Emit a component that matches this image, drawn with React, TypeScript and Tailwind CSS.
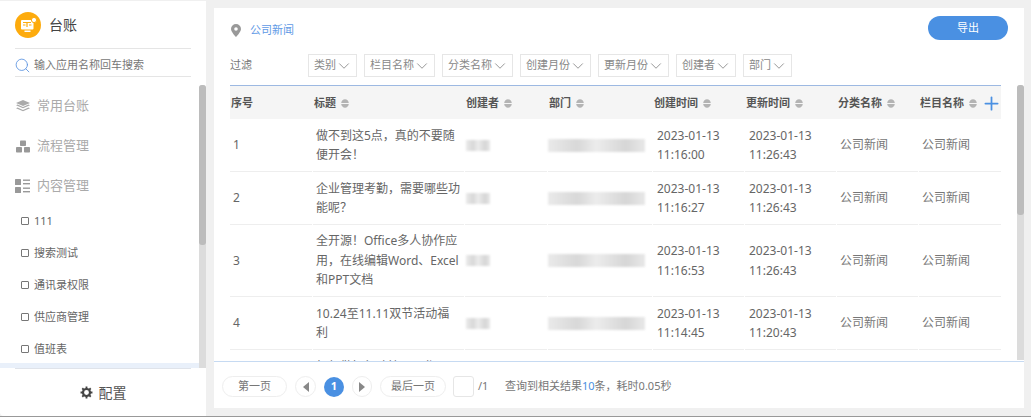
import React from "react";
import { ChevronDown, Plus, Search } from "lucide-react";

const FONT = "font-['Noto_Sans','Noto_Sans_CJK_SC',sans-serif]";

const Sort = () => (
  <svg width="8" height="9" viewBox="0 0 8 9" className="ml-[5px] shrink-0">
    <path d="M4 0.3C6 0.3 7.6 2 7.8 4H0.2C0.4 2 2 0.3 4 0.3z" fill="#b4b4b4" />
    <path d="M4 8.7C6 8.7 7.6 7 7.8 5H0.2C0.4 7 2 8.7 4 8.7z" fill="#b4b4b4" />
  </svg>
);

const Sub = ({ label }: { label: string }) => (
  <div className="flex h-8 items-center pl-[21px] text-[11px] text-[#666]">
    <span className="mr-[5px] h-[8px] w-[8px] rounded-[1px] border border-[#777]" />
    {label}
  </div>
);

const Blur = ({ w, h }: { w: number; h: number }) => (
  <div
    className="bg-[linear-gradient(90deg,#eaeaea,#d8d8d8_30%,#ececec_50%,#d6d6d6_80%,#e8e8e8)] blur-[1px]"
    style={{ width: w, height: h }}
  />
);

const filters = ["类别", "栏目名称", "分类名称", "创建月份", "更新月份", "创建者", "部门"];
const headers = ["序号", "标题", "创建者", "部门", "创建时间", "更新时间", "分类名称", "栏目名称"];

const rows = [
  { n: "1", t: "做不到这5点，真的不要随便开会！", c: "2023-01-13", c2: "11:16:00", u: "11:26:43", h: "h-[53px]" },
  { n: "2", t: "企业管理考勤，需要哪些功能呢？", c: "2023-01-13", c2: "11:16:27", u: "11:26:43", h: "h-[53px]" },
  { n: "3", t: "全开源！Office多人协作应用，在线编辑Word、Excel和PPT文档", c: "2023-01-13", c2: "11:16:53", u: "11:26:43", h: "h-[72px]" },
  { n: "4", t: "10.24至11.11双节活动福利", c: "2023-01-13", c2: "11:14:45", u: "11:20:43", h: "h-[53px]" },
];

const cell = "border-b border-[#eeeeee] flex items-center text-[12px] leading-[19.5px] text-[#666]";
const cols = "grid grid-cols-[82px_151px_82px_104px_91px_91px_81px_82px] gap-x-px";

export default function App() {
  return (
    <div className={`${FONT} flex h-[417px] w-[1031px] overflow-hidden border-b border-[#999] bg-[#f0f0f0] pt-[1px]`}>
      <aside className="relative flex h-full w-[206px] shrink-0 flex-col rounded-bl-[4px] bg-white">
        <div className="mx-[15px] flex h-[48px] shrink-0 items-center gap-[8px] border-b border-[#e5e5e5]">
          <svg width="26" height="26" viewBox="0 0 26 26" className="shrink-0">
            <circle cx="13" cy="13" r="13" fill="#fdab0d" />
            <rect x="6" y="8" width="12.5" height="9.5" rx="1" fill="#fff" />
            <rect x="9.5" y="18.5" width="6" height="1.5" fill="#fff" />
            <path d="M8 10.5h8M8 13h2.5M12 11v4M14 13h2.5" stroke="#fdab0d" strokeWidth="1.2" />
            <circle cx="19" cy="8" r="2.6" fill="#fff" stroke="#fdab0d" strokeWidth="1" />
          </svg>
          <span className="text-[14px] text-[#444]">台账</span>
        </div>
        <div className="mx-[15px] flex h-[28px] shrink-0 items-center border-b border-[#e5e5e5] pt-[5px]">
          <Search size={17} strokeWidth={1.2} className="-ml-[1.5px] mr-[3.5px] text-[#5b94e0]" />
          <span className="text-[11px] text-[#777]">输入应用名称回车搜索</span>
        </div>
        <nav className="relative flex-1 overflow-hidden pt-[9px]">
          {[
            ["常用台账", <svg key="a" width="14" height="13" viewBox="0 0 14 13" fill="#aaa"><path d="M7 0l7 3-7 3-7-3z" /><path d="M0 5.2l1.6-.7L7 6.9l5.4-2.4 1.6.7L7 8.3z" /><path d="M0 8.2l1.6-.7L7 9.9l5.4-2.4 1.6.7L7 11.3z" /></svg>],
            ["流程管理", <svg key="b" width="14" height="13" viewBox="0 0 14 13" fill="#999"><rect x="4" y="0.5" width="6" height="5.5" rx="0.8" /><rect x="0" y="7" width="6" height="5.5" rx="0.8" /><rect x="8" y="7" width="6" height="5.5" rx="0.8" /></svg>],
            ["内容管理", <svg key="c" width="15" height="14" viewBox="0 0 15 14" fill="#999"><rect x="0" y="0" width="6" height="6" rx="0.6" /><rect x="0" y="8" width="6" height="6" rx="0.6" /><rect x="8" y="0.5" width="7" height="1.4" /><rect x="8" y="4" width="7" height="1.4" /><rect x="8" y="8.5" width="7" height="1.4" /><rect x="8" y="12" width="7" height="1.4" /></svg>],
          ].map(([label, icon]) => (
            <div key={label as string} className="flex h-[40px] items-center pl-[15px] text-[13px] text-[#aaa]">
              <span className="mr-[7px] flex w-[15px] justify-center">{icon}</span>
              {label}
            </div>
          ))}
          <div className="-mt-[1px]">
            <Sub label="111" />
            <Sub label="搜索测试" />
            <Sub label="通讯录权限" />
            <Sub label="供应商管理" />
            <Sub label="值班表" />
          </div>
          <div className="absolute bottom-0 left-0 right-0 h-[5px] bg-[#e9f0fa]" />
          <div className="absolute bottom-0 right-0 top-[8px] w-[7px] rounded-t-[3px] bg-[#dcdcdc]" />
          <div className="absolute right-0 top-[8px] h-[160px] w-[7px] rounded-[3px] bg-[#bcbcbc]" />
        </nav>
        <div className="mx-[15px] border-t border-[#dfe3ea]" />
        <div className="flex h-[47px] shrink-0 items-center justify-center gap-[6px] text-[14px] text-[#555]">
          <svg width="13" height="13" viewBox="0 0 24 24" fill="none" stroke="#444" strokeWidth="4">
            <circle cx="12" cy="12" r="6.5" />
            <path d="M12 1v4M12 19v4M1 12h4M19 12h4M4.2 4.2l2.8 2.8M17 17l2.8 2.8M4.2 19.8 7 17M17 7l2.8-2.8" strokeWidth="3.4" />
          </svg>
          配置
        </div>
      </aside>

      <div className="min-w-0 flex-1 pb-[8px] pl-[8px] pr-[7px] pt-[7px]">
        <main className="relative flex h-full flex-col bg-white">
          <div className="flex h-[29px] shrink-0 items-start justify-end pr-[16px] pt-[8px]">
            <div className="flex-1 pl-[17px] pt-[6px]">
              <div className="flex items-center text-[11px] text-[#5f9ae6]">
                <svg width="10" height="13" viewBox="0 0 10 13" className="mr-[9px] shrink-0">
                  <path fillRule="evenodd" d="M5 0a5 5 0 0 1 5 5c0 3-5 8-5 8S0 8 0 5a5 5 0 0 1 5-5zm0 3.2a1.8 1.8 0 1 0 0 3.6 1.8 1.8 0 0 0 0-3.6z" fill="#999" />
                </svg>
                公司新闻
              </div>
            </div>
            <button className="flex h-[24px] w-[80px] items-center justify-center rounded-full bg-[#4a90e2] text-[11px] text-white">导出</button>
          </div>
          <div className="flex shrink-0 items-center pl-[16px] pt-[17px]">
            <span className="w-[78px] text-[11px] text-[#777]">过滤</span>
            <div className="flex gap-[7px]">
              {filters.map((f) => (
                <div key={f} className="flex h-[23px] items-center gap-[3px] border border-[#e6e6e6] pl-[5px] pr-[8px] text-[11px] text-[#888]">
                  {f}
                  <ChevronDown size={18} strokeWidth={0.9} className="-mx-[4.5px] text-[#666]" />
                </div>
              ))}
            </div>
          </div>

          <div className="relative ml-[16px] mt-[8px] min-h-0 flex-1 overflow-hidden">
            <div className="w-[771px] border-t border-[#9db9e2]">
              <div className={`${cols} bg-[#f5f5f5]`}>
                {headers.map((h, i) => (
                  <div key={h} className="flex h-[33px] items-center pl-[1px] pt-[1px] text-[11px] font-bold text-[#555]">
                    {h}
                    {i > 0 && <Sort />}
                    {i === 7 && <Plus size={21} strokeWidth={2} className="-mr-[3px] ml-[4px] shrink-0 text-[#4a90e2]" />}
                  </div>
                ))}
              </div>
              <div className={cols}>
                {rows.map((r) => (
                  <React.Fragment key={r.n}>
                    <div className={`${cell} ${r.h} pl-[3px]`}>{r.n}</div>
                    <div className={`${cell} ${r.h} pl-[3px] pr-[4px]`}><span>{r.t}</span></div>
                    <div className={`${cell} ${r.h} pl-[1px]`}><Blur w={24} h={11} /></div>
                    <div className={`${cell} ${r.h}`}><Blur w={97} h={13} /></div>
                    <div className={`${cell} ${r.h} pl-[4px]`}><span>{r.c}<br />{r.c2}</span></div>
                    <div className={`${cell} ${r.h} pl-[4px]`}><span>{r.c}<br />{r.u}</span></div>
                    <div className={`${cell} ${r.h} pl-[3px] text-[11px] text-[#777]`}>公司新闻</div>
                    <div className={`${cell} ${r.h} pl-[3px] text-[11px] text-[#777]`}>公司新闻</div>
                  </React.Fragment>
                ))}
                <div className="col-start-2 pl-[3px] pt-[7px] text-[12px] leading-[19.5px] text-[#666]">如何做好行政管理工作</div>
              </div>
            </div>
          </div>
          <div className="absolute bottom-[48px] right-0 top-[77px] w-[7px] rounded-t-[3px] bg-[#dcdcdc]">
            <div className="h-[130px] w-[7px] rounded-[3px] bg-[#bcbcbc]" />
          </div>

          <footer className="flex h-[47px] shrink-0 items-center gap-[8px] border-t border-[#c6daf2] bg-white pl-[8px] pt-[3px] text-[11px] text-[#777]">
            <div className="flex h-[21px] w-[65px] items-center justify-center rounded-full border border-[#eeeeee]">第一页</div>
            <div className="flex h-[21px] w-[21px] items-center justify-center rounded-full border border-[#eeeeee]">
              <svg width="6" height="10" viewBox="0 0 6 10"><path d="M6 0v10L0 5z" fill="#888" /></svg>
            </div>
            <div className="flex h-[20px] w-[20px] items-center justify-center rounded-full bg-[#4a90e2] font-bold text-white">1</div>
            <div className="flex h-[21px] w-[20px] items-center justify-center rounded-full border border-[#eeeeee]">
              <svg width="6" height="10" viewBox="0 0 6 10"><path d="M0 0v10l6-5z" fill="#888" /></svg>
            </div>
            <div className="flex h-[21px] w-[66px] items-center justify-center rounded-full border border-[#eeeeee]">最后一页</div>
            <div className="-ml-[1px] -mr-[4px] h-[21px] w-[21px] rounded-[3px] border border-[#e6e6e6]" />
            <span className="w-[19px]">/1</span>
            <span>查询到相关结果<span className="text-[#4a90e2]">10</span>条，耗时0.05秒</span>
          </footer>
        </main>
      </div>
    </div>
  );
}
